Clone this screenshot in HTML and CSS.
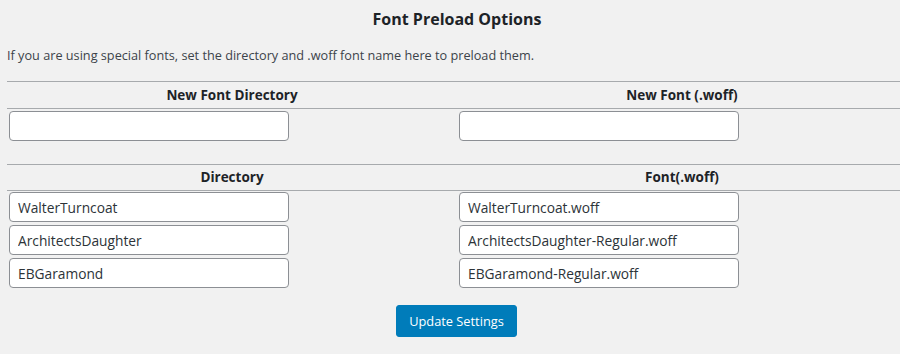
FILE: index.html
```html
<!DOCTYPE html>
<html>
	<head>
		<meta charset="UTF-8">
		<title>Font Preload Options</title>
		<link rel="stylesheet" href="styles.css">
	</head>
	<body>
		<div class="wrap">
			<h2>Font Preload Options</h2>
			<p class="intro">If you are using special fonts, set the directory and .woff font name here to preload them.</p>

			<div class="fontTable newFonts">
				<div class="head">New Font Directory</div>
				<div class="head">New Font (.woff)</div>
				<div class="cell"><input type="text" value=""/></div>
				<div class="cell"><input type="text" value=""/></div>
			</div>

			<div class="fontTable savedFonts">
				<div class="head">Directory</div>
				<div class="head">Font(.woff)</div>
				<div class="cell"><input type="text" value="WalterTurncoat"/></div>
				<div class="cell"><input type="text" value="WalterTurncoat.woff"/></div>
				<div class="cell"><input type="text" value="ArchitectsDaughter"/></div>
				<div class="cell"><input type="text" value="ArchitectsDaughter-Regular.woff"/></div>
				<div class="cell"><input type="text" value="EBGaramond"/></div>
				<div class="cell"><input type="text" value="EBGaramond-Regular.woff"/></div>
			</div>

			<div class="submit">
				<button type="button">Update Settings</button>
			</div>
		</div>
	</body>
</html>
```

FILE: styles.css
```css
*{margin: 0;padding: 0;box-sizing: border-box;}
html, body{
	background: #f1f1f1;
	overflow: hidden;
}
body{
	font-family: "Open Sans", "Noto Sans", sans-serif;
	font-size: 12.7px;
	color: #3c434a;
}
.wrap{
	width: 907px;
	padding-left: 7px;
}
h2{
	font-size: 16px;
	font-weight: 700;
	color: #1d2327;
	text-align: center;
	padding-top: 8px;
	height: 42px;
}
.intro{
	height: 39px;
	line-height: 26px;
}
.fontTable{
	display: grid;
	grid-template-columns: 450px 450px;
	border-top: 1px solid #a7aaad;
}
.fontTable .head{
	font-weight: 700;
	font-size: 13.5px;
	color: #1d2327;
	text-align: center;
	height: 27px;
	line-height: 26px;
	border-bottom: 1px solid #a7aaad;
}
.savedFonts .head{
	height: 26px;
	line-height: 25px;
}
.cell{
	padding: 2px;
}
.newFonts{
	margin-bottom: 21px;
}
.savedFonts .cell{
	padding: 1px 2px 2px 2px;
}
input{
	display: block;
	width: 280px;
	height: 30px;
	padding: 0 8px;
	border: 1px solid #8c8f94;
	border-radius: 4px;
	background: #fff;
	font-family: "Open Sans", "Noto Sans", sans-serif;
	font-size: 13.75px;
	color: #2c3338;
}
.submit{
	width: 893px;
	text-align: center;
	padding-top: 15px;
}
button{
	background: #007cba;
	border: 1px solid #007cba;
	border-radius: 3px;
	color: #fff;
	font-family: "Open Sans", "Noto Sans", sans-serif;
	font-size: 12.8px;
	height: 32px;
	padding: 0 12px;
	margin-left: 6px;
	cursor: pointer;
}
```
